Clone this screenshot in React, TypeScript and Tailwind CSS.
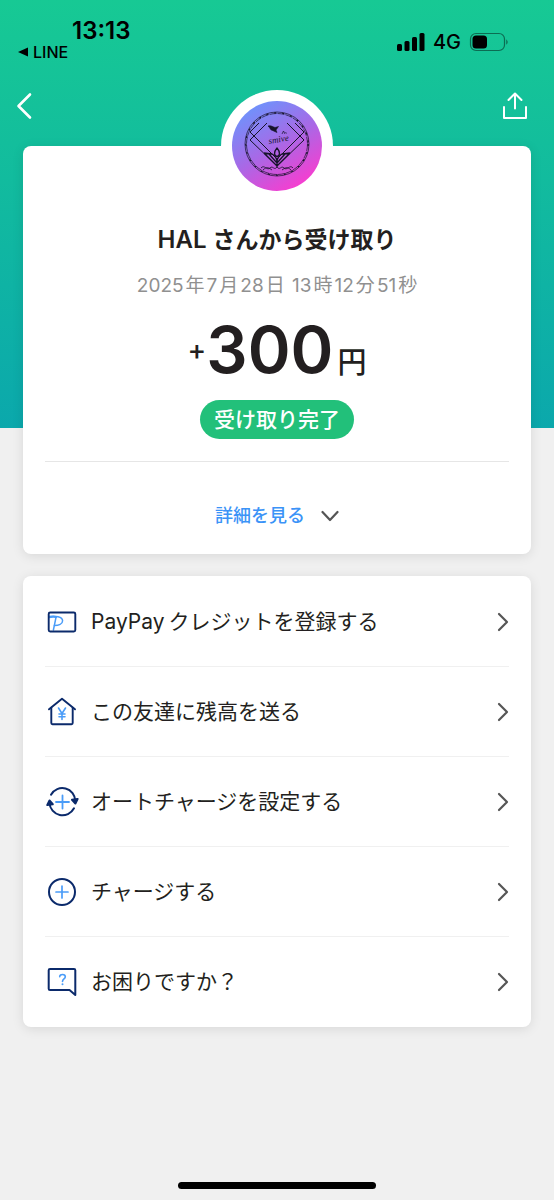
import type { ReactNode } from "react"

interface MenuRowProps {
  label: ReactNode
  icon: ReactNode
}

const NAVY = "#0b2a6b"
const BLUE = "#4a9cf8"

const dateParts = ["2025", "年", "7", "月", "28", "日 ", "13", "時", "12", "分", "51", "秒"]

function ChevronRight() {
  return (
    <svg width="12" height="20" viewBox="0 0 12 20" fill="none" stroke="#555" strokeWidth="2.200" strokeLinecap="round" strokeLinejoin="round">
      <polyline points="2 2 10 10 2 18" />
    </svg>
  )
}

function CreditIcon() {
  return (
    <svg width="34" height="34" viewBox="0 0 34 34" fill="none" strokeLinecap="round" strokeLinejoin="round">
      <path d="M4 11.500C10 10.600 17.600 11.400 17.600 15.800C17.600 19 13.600 20.600 9.400 20.600" stroke={BLUE} strokeWidth="1.500" />
      <path d="M4 12.200C6.500 11.700 9 11.700 11 12" stroke={BLUE} strokeWidth="2" />
      <path d="M11 12.400L8.400 25" stroke={BLUE} strokeWidth="1.500" />
      <rect x="3.700" y="7.500" width="26.600" height="19" rx="1.500" stroke={NAVY} strokeWidth="1.900" />
    </svg>
  )
}

function HouseYenIcon() {
  return (
    <svg width="34" height="34" viewBox="0 0 34 34" fill="none" strokeLinecap="round" strokeLinejoin="round">
      <path d="M4 14.300L17 3.800L30 14.300" stroke={NAVY} strokeWidth="1.900" />
      <path d="M6.300 12.600V28Q6.300 29.200 7.500 29.200H26.500Q27.700 29.200 27.700 28V12.600" stroke={NAVY} strokeWidth="1.900" />
      <path d="M13.500 13L17 18.500L20.500 13M17 18.500V24.500M14 19H20M14 21.800H20" stroke={BLUE} strokeWidth="1.600" />
    </svg>
  )
}

function AutoChargeIcon() {
  return (
    <svg width="34" height="34" viewBox="0 0 34 34" fill="none" stroke={NAVY} strokeWidth="2" strokeLinecap="round" strokeLinejoin="round">
      <path d="M6 9.700A13 13 0 0 1 30.300 16" />
      <path d="M29 23.300A13 13 0 0 1 4.500 18" />
      <path d="M27 14.800L30.400 18.500L32.600 14Z" fill={NAVY} />
      <path d="M2.300 20L4.500 15.500L7.800 19.200Z" fill={NAVY} />
      <path d="M17.500 10.500V23.500M11 17H24" stroke={BLUE} strokeWidth="1.800" />
    </svg>
  )
}

function ChargeIcon() {
  return (
    <svg width="34" height="34" viewBox="0 0 34 34" fill="none" strokeLinecap="round">
      <circle cx="17" cy="17" r="13" stroke={NAVY} strokeWidth="2" />
      <path d="M17 11V23M11 17H23" stroke={BLUE} strokeWidth="1.700" />
    </svg>
  )
}

function HelpIcon() {
  return (
    <svg width="34" height="34" viewBox="0 0 34 34" fill="none" strokeLinecap="round" strokeLinejoin="round">
      <path d="M5 4H29Q30.300 4 30.300 5.300V30L24.500 25H5Q3.700 25 3.700 23.700V5.300Q3.700 4 5 4Z" stroke={NAVY} strokeWidth="2" />
      <path d="M14.700 11.700C14.700 8.700 20.300 8.700 20.300 11.800C20.300 14 17.500 14 17.500 16.500" stroke={BLUE} strokeWidth="1.600" />
      <circle cx="17.500" cy="19.300" r="1" fill={BLUE} />
    </svg>
  )
}

function Avatar() {
  return (
    <svg width="90" height="90" viewBox="0 0 90 90" fill="none" stroke="#17142b" strokeLinejoin="round" className="rounded-full">
      <defs>
        <linearGradient id="avatar-bg" x1="0.150" y1="0.100" x2="0.700" y2="1">
          <stop offset="0" stopColor="#6f92fb" />
          <stop offset="0.500" stopColor="#a968e6" />
          <stop offset="1" stopColor="#f93ccf" />
        </linearGradient>
      </defs>
      <rect width="90" height="90" fill="url(#avatar-bg)" stroke="none" />
      {/* 外側の輪 */}
      <circle cx="45" cy="43" r="32" strokeWidth="0.700" />
      <circle cx="45" cy="43" r="30.500" strokeWidth="0.700" strokeDasharray="7 1" />
      <circle cx="45" cy="43" r="31.200" strokeWidth="1.200" strokeDasharray="2 6" />
      {/* 菱形 */}
      <path d="M35 22L18 39L43 63M18 31L43 56M18 31L27 22" strokeWidth="1" />
      <path d="M55 22L72 39L47 63M72 31L47 56M72 31L63 22" strokeWidth="1" />
      <path d="M32 52L40 53Q44 55 45 60Q46 55 50 53L58 52M32 52L45 65L58 52M37 53L45 62L53 53M45 57V66" strokeWidth="1.300" />
      <path d="M45 47C41.500 51 42 55 45 55.500C48 55 48.500 51 45 47Z" strokeWidth="1.300" />
      <path d="M29 67C32 63 35 70 38 67C41 64 42 70 45 66C48 70 49 64 52 67C55 70 58 63 61 67M31 69C35 65 37 67 40 69M59 69C55 65 53 67 50 69" strokeWidth="0.800" />
      {/* 鳥 */}
      <path d="M36 25C39 24 41 26 43 26.500L46.500 25.500L44 29L45 31.500L40.500 29.500C38 29 38.500 27 36 25Z" fill="#17142b" strokeWidth="0.600" />
      <path d="M50 33L51.500 30L53 33M53.500 31L54.500 32.500" strokeWidth="0.700" />
      <text x="37" y="43" fontSize="9" fontStyle="italic" fill="#17142b" stroke="none" transform="rotate(-10 37 43)" fontFamily="Liberation Serif, serif">
        smive
      </text>
    </svg>
  )
}

function MenuRow({ label, icon }: MenuRowProps) {
  return (
    <li className="border-b border-[#f0f0f0] last:border-b-0">
      <a href="#" className="flex h-[89px] items-center gap-3">
        {icon}
        <span className="grow text-[21px] leading-8">{label}</span>
        <ChevronRight />
      </a>
    </li>
  )
}

function StatusBar() {
  return (
    <div className="flex items-start justify-between pr-[45px] text-black">
      <div className="pt-[18px]">
        <div className="pl-[72px] text-2xl leading-[26px] font-semibold">13:13</div>
        <a href="#" className="flex items-center gap-1 pl-[17px] text-base leading-4 font-medium">
          <svg width="12" height="10" viewBox="0 0 12 10">
            <path d="M1 5L11 0.500V9.500Z" />
          </svg>
          LINE
        </a>
      </div>
      <div className="flex items-center gap-2 pt-7">
        <svg width="29" height="18" viewBox="0 0 29 18">
          <rect x="1" y="11" width="5" height="7" rx="1.500" />
          <rect x="8.500" y="8" width="5" height="10" rx="1.500" />
          <rect x="16" y="4" width="5" height="14" rx="1.500" />
          <rect x="23.500" y="0" width="5" height="18" rx="1.500" />
        </svg>
        <span className="text-xl leading-7 font-medium">4G</span>
        <svg width="40" height="20" viewBox="0 0 40 20">
          <rect x="1.500" y="1.500" width="34" height="17" rx="5.500" fill="none" stroke="#000" strokeOpacity="0.450" strokeWidth="1.200" />
          <rect x="3.500" y="3.500" width="14.500" height="13" rx="3.500" />
          <path d="M37.300 7.200Q40 10 37.300 12.800Z" fillOpacity="0.500" />
        </svg>
      </div>
    </div>
  )
}

export default function App() {
  return (
    <div className="flex min-h-screen flex-col bg-[#f0f0f0] bg-[linear-gradient(to_bottom,#17c994,#0ba8ac)] bg-[length:100%_428px] bg-no-repeat font-['Inter','Noto_Sans_CJK_JP',sans-serif] text-[#231f20]" lang="ja">
      <StatusBar />

      <header className="mt-8 flex h-7 items-center justify-between pr-[25px] pl-4">
        <button type="button" aria-label="戻る">
          <svg width="16" height="28" viewBox="0 0 16 28" fill="none" stroke="#fff" strokeWidth="2.600" strokeLinecap="round" strokeLinejoin="round">
            <polyline points="14 2.500 2.500 14 14 25.500" />
          </svg>
        </button>
        <button type="button" aria-label="共有">
          <svg width="28" height="28" viewBox="0 0 28 28" fill="none" stroke="#fff" strokeWidth="2" strokeLinecap="round" strokeLinejoin="round">
            <path d="M3 15V26H25V15M14 16.500V2M7.500 8L14 1.500L20.500 8" />
          </svg>
        </button>
      </header>

      <main className="mt-[26px] flex flex-col gap-[22px] px-[23px]">
        <section className="rounded-lg bg-white px-[22px] shadow-[0_2px_12px_rgba(0,0,0,0.1)]">
          <div className="flex flex-col items-center border-b border-[#e6e6e6] pb-[22px]">
            <div className="-mt-14 flex size-28 items-center justify-center rounded-full bg-white">
              <Avatar />
            </div>
            <h1 className="mt-[22px] flex items-baseline gap-[6px] text-2xl leading-8 font-semibold">
              <span>HAL</span>
              <span className="text-[23px]">さんから受け取り</span>
            </h1>
            <time dateTime="2025-07-28T13:12:51" className="mt-4 flex gap-[2px] text-[19px] leading-7 whitespace-pre text-[#909090]">
              {dateParts.map((part, index) => (
                <span key={index}>{part}</span>
              ))}
            </time>
            <p className="mt-[10px] flex items-center font-semibold">
              <span className="text-[28px] font-medium">+</span>
              <span className="flex items-baseline gap-1">
                <span className="text-[65px] leading-20">300</span>
                <span className="text-[29px] font-medium">円</span>
              </span>
            </p>
            <span className="mt-[10px] rounded-full bg-[#22c07a] px-[14px] text-[21px] leading-[39px] font-medium text-white">受け取り完了</span>
          </div>
          <button type="button" className="flex w-full items-center justify-center gap-4 pt-[39px] pb-[23px] text-lg leading-[30px] font-medium text-[#3b93f7]">
            詳細を見る
            <svg width="18" height="12" viewBox="0 0 18 12" fill="none" stroke="#555" strokeWidth="2.200" strokeLinecap="round" strokeLinejoin="round">
              <polyline points="1.500 2 9 10 16.500 2" />
            </svg>
          </button>
        </section>

        <nav className="rounded-lg bg-white px-[22px] py-px shadow-[0_2px_12px_rgba(0,0,0,0.1)]">
          <ul>
            <MenuRow
              icon={<CreditIcon />}
              label={
                <span className="flex gap-1">
                  <span>PayPay</span>
                  <span>クレジットを登録する</span>
                </span>
              }
            />
            <MenuRow icon={<HouseYenIcon />} label="この友達に残高を送る" />
            <MenuRow icon={<AutoChargeIcon />} label="オートチャージを設定する" />
            <MenuRow icon={<ChargeIcon />} label="チャージする" />
            <MenuRow icon={<HelpIcon />} label="お困りですか？" />
          </ul>
        </nav>
      </main>

      <footer className="mt-auto flex justify-center pt-10 pb-[11px]">
        <div className="h-[7px] w-[198px] rounded-full bg-black" />
      </footer>
    </div>
  )
}
